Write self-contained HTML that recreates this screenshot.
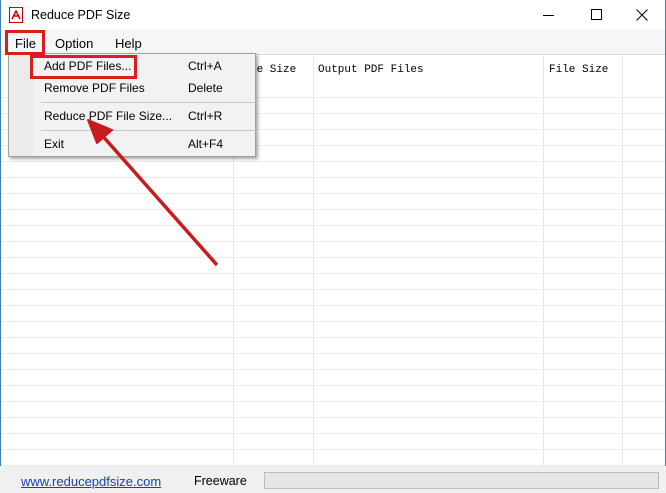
<!DOCTYPE html>
<html><head><style>
*{margin:0;padding:0;box-sizing:border-box}
body{width:666px;height:493px;position:relative;overflow:hidden;background:#fff;font-family:"Liberation Sans",sans-serif;font-size:12px;color:#000}
.abs{position:absolute}
.title{left:0;top:0;width:666px;height:30px;background:#fff}
.menubar{left:0;top:30px;width:666px;height:25px;background:#f5f6f7;border-bottom:1px solid #dadada}
.list{left:1px;top:56px;width:664px;height:410px;background:#fff;
background-image:repeating-linear-gradient(to bottom,transparent 0,transparent 15px,#ececec 15px,#ececec 16px);background-position:0 26px;}
.hdr{left:1px;top:56px;width:664px;height:26px;background:#fff}
.vl{width:1px;background:#e6e6e6;top:56px;height:410px}
.mono{font-family:"Liberation Mono","Noto Sans CJK SC",monospace;font-size:11px}
.status{left:0;top:466px;width:666px;height:27px;background:#f0f0f0}
.menu{left:8px;top:53px;width:248px;height:104px;background:#f2f2f2;border:1px solid #a0a0a0;box-shadow:2px 2px 3px rgba(0,0,0,.35)}
.item{position:absolute;left:35px;font-size:12px}
.sc{position:absolute;left:179px;font-size:12px}
.sep{position:absolute;left:32px;width:216px;height:1px;background:#c8c8c8}
.red{border:3px solid #d81e1e;position:absolute}
</style></head><body>
<div class="abs title"></div>
<svg class="abs" style="left:9px;top:7px" width="14" height="16" viewBox="0 0 14 16"><rect x="0.5" y="0.5" width="13" height="15" fill="#fff" stroke="#c00"/><path d="M3 12 L7 4 L11 12 M4 9 L10 9" stroke="#c00" stroke-width="1.5" fill="none"/></svg>
<div class="abs" style="left:31px;top:8px;font-size:12.5px">Reduce PDF Size</div>
<div class="abs" style="left:543px;top:15px;width:11px;height:1px;background:#000"></div>
<div class="abs" style="left:591px;top:9px;width:11px;height:11px;border:1px solid #000"></div>
<svg class="abs" style="left:636px;top:9px" width="12" height="12"><path d="M0.5 0.5 L11.5 11.5 M11.5 0.5 L0.5 11.5" stroke="#000"/></svg>
<div class="abs menubar"></div>
<div class="abs" style="left:15px;top:36px;font-size:13px">File</div>
<div class="abs" style="left:55px;top:36px;font-size:13px">Option</div>
<div class="abs" style="left:115px;top:36px;font-size:13px">Help</div>
<div class="abs list"></div>
<div class="abs hdr"></div>
<div class="abs vl" style="left:233px"></div>
<div class="abs vl" style="left:313px"></div>
<div class="abs vl" style="left:543px"></div>
<div class="abs vl" style="left:622px"></div>
<div class="abs mono" style="left:250px;top:64px">le Size</div>
<div class="abs mono" style="left:318px;top:64px">Output PDF Files</div>
<div class="abs mono" style="left:549px;top:64px">File Size</div>
<div class="abs" style="left:0;top:0;width:1px;height:493px;background:#3c7fb1"></div>
<div class="abs" style="right:0;top:0;width:1px;height:493px;background:#3c7fb1"></div>
<div class="abs status"></div>
<div class="abs" style="left:21px;top:474px;font-size:13px;color:#1a3fb5;text-decoration:underline">www.reducepdfsize.com</div>
<div class="abs" style="left:194px;top:474px;font-size:12.5px">Freeware</div>
<div class="abs" style="left:264px;top:472px;width:395px;height:17px;background:#e6e6e6;border:1px solid #bcbcbc"></div>
<div class="abs menu">
 <div class="abs" style="left:0;top:0;width:24px;height:102px;background:#ebebeb"></div>
 <div class="item" style="top:5px">Add PDF Files...</div><div class="sc" style="top:5px">Ctrl+A</div>
 <div class="item" style="top:27px">Remove PDF Files</div><div class="sc" style="top:27px">Delete</div>
 <div class="sep" style="top:48px"></div>
 <div class="item" style="top:55px">Reduce PDF File Size...</div><div class="sc" style="top:55px">Ctrl+R</div>
 <div class="sep" style="top:76px"></div>
 <div class="item" style="top:83px">Exit</div><div class="sc" style="top:83px">Alt+F4</div>
</div>
<div class="red" style="left:5px;top:30px;width:40px;height:25px"></div>
<div class="red" style="left:30px;top:55px;width:107px;height:24px"></div>
<svg class="abs" style="left:0;top:0" width="666" height="493"><path d="M217 265 L100 133" stroke="#c81c1c" stroke-width="3.5"/><path d="M88 120 L112 130 L97 143 Z" fill="#c81c1c" stroke="#c81c1c" stroke-width="2" stroke-linejoin="round"/></svg>
</body></html>
